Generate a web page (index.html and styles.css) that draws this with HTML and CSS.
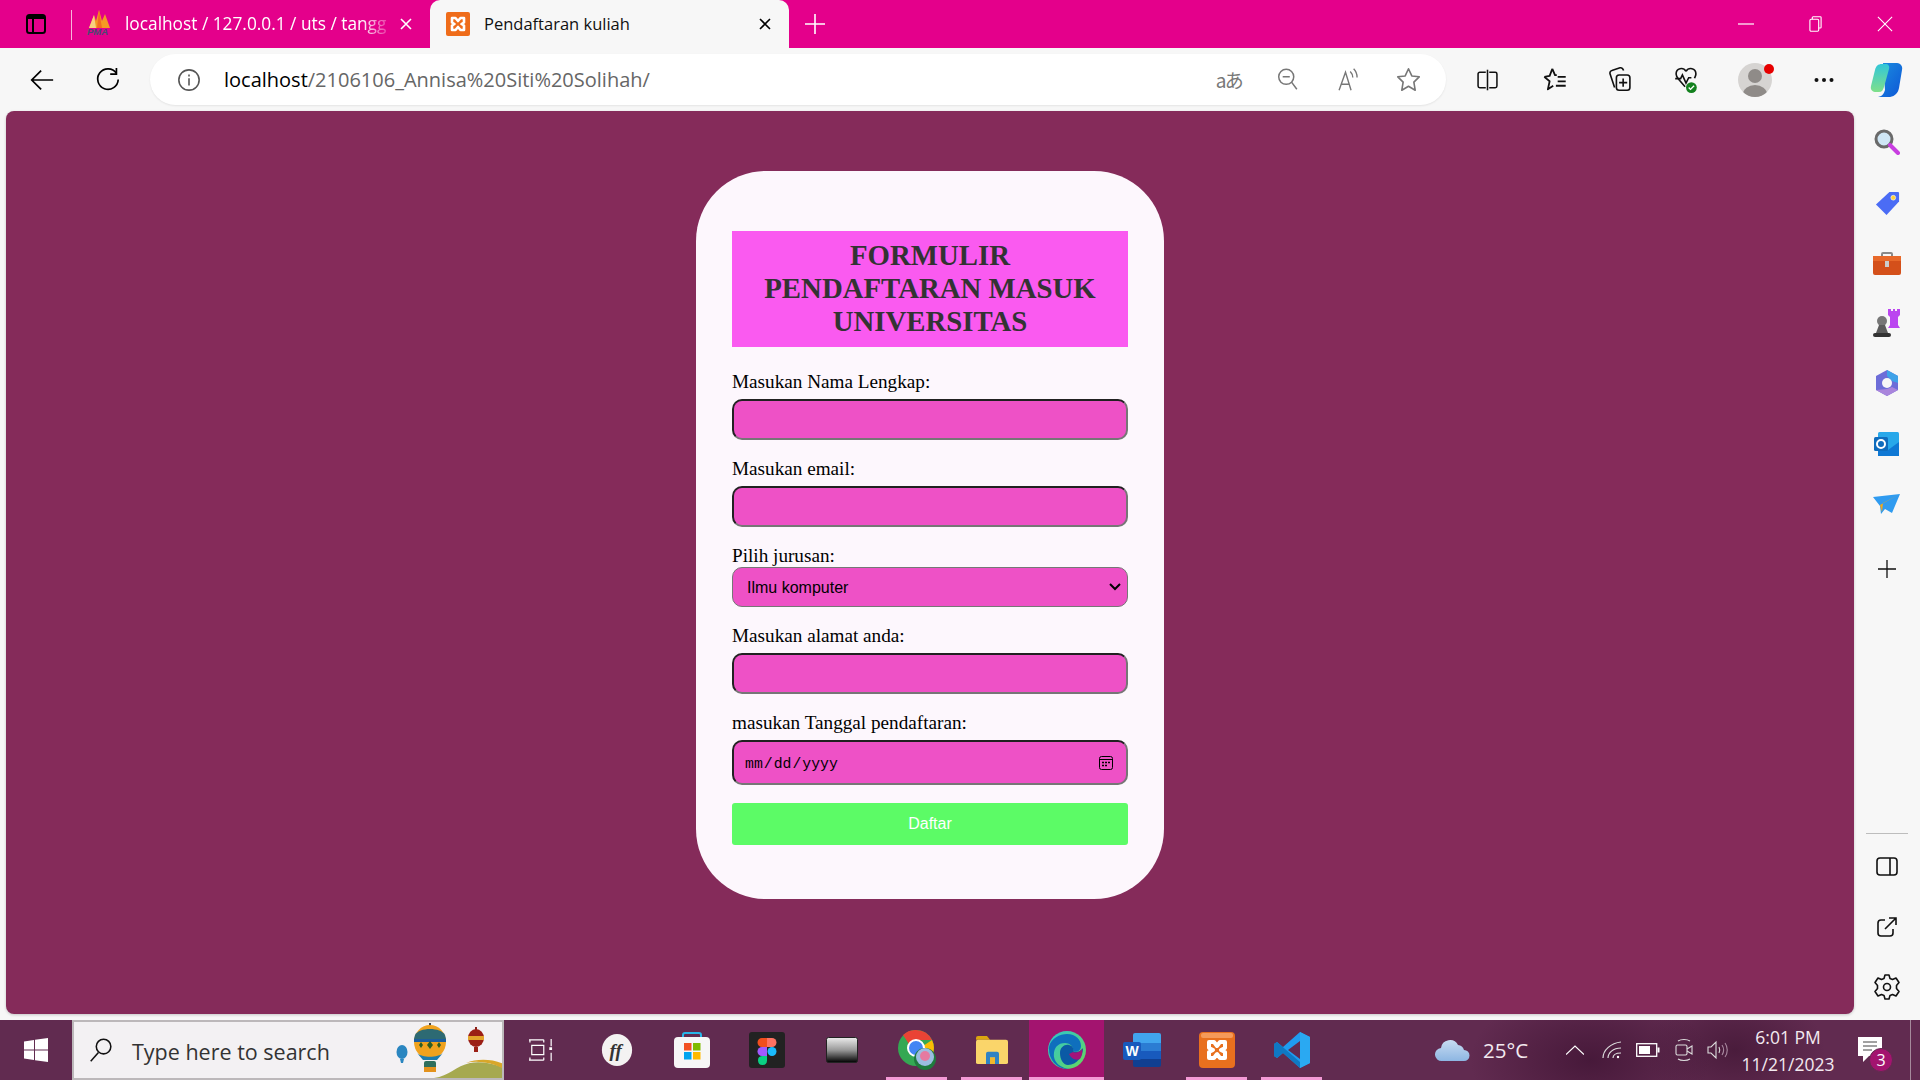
FILE: index.html
```html
<!DOCTYPE html>
<html lang="id">
<head>
<meta charset="utf-8">
<title>Pendaftaran kuliah</title>
<link rel="stylesheet" href="styles.css">
</head>
<body>
<div class="tabbar">
  <div class="tb-slot tb-side"><svg width="24" height="24" viewBox="0 0 24 24" fill="none" stroke="#000" stroke-width="2"><rect x="3" y="3" width="18" height="18" rx="2.5"/><path d="M3 5h18" stroke-width="4"/><path d="M9 7v14"/></svg></div>
  <div class="tb-sep"></div>
  <div class="tab tab-off">
    <svg class="fav" width="26" height="28" viewBox="0 0 26 28"><path d="M3 18 8 5l2 6 3-11 3 11 3-7 5 14z" fill="#f59a23"/><path d="M8 5l2 13H3z" fill="#f9d27f"/><path d="M13 0l3 18h-5z" fill="#f26b21"/><text x="1" y="25" class="pma">PMA</text></svg>
    <span class="tab-title tab-fade">localhost / 127.0.0.1 / uts / tangg</span>
    <svg class="tab-x" width="14" height="14" viewBox="0 0 14 14" stroke="#fff" stroke-width="1.6"><path d="M2 2l10 10M12 2 2 12"/></svg>
  </div>
  <div class="tab tab-on">
    <svg class="fav" width="24" height="24" viewBox="0 0 24 24"><rect width="24" height="24" rx="2" fill="#ef6c1a"/><path d="M6 6h3.500L12 9l2.500-3H18v4.500L15.500 12l2.500 1.500V18h-3.500L12 15l-2.500 3H6v-4.500L8.500 12 6 10.500z" fill="#ef6c1a" stroke="#fff" stroke-width="2.600" stroke-linejoin="round"/></svg>
    <span class="tab-title">Pendaftaran kuliah</span>
    <svg class="tab-x" width="14" height="14" viewBox="0 0 14 14" stroke="#000" stroke-width="1.6"><path d="M2 2l10 10M12 2 2 12"/></svg>
  </div>
  <div class="tb-plus"><svg width="22" height="22" viewBox="0 0 22 22" stroke="#fff" stroke-width="1.6"><path d="M11 1v20M1 11h20"/></svg></div>
  <div class="win">
    <svg width="16" height="16" viewBox="0 0 16 16" stroke="#fff" stroke-width="1.2"><path d="M0 8h16"/></svg>
    <svg width="15" height="16" viewBox="0 0 16 20" fill="none" stroke="#fff" stroke-width="1.4"><rect x="1" y="4" width="11" height="15" rx="1.5"/><path d="M4 4V2a1 1 0 0 1 1-1h9a1 1 0 0 1 1 1v12a1 1 0 0 1-1 1h-2"/></svg>
    <svg width="16" height="16" viewBox="0 0 18 18" stroke="#fff" stroke-width="1.2"><path d="M1 1l16 16M17 1 1 17"/></svg>
  </div>
</div>

<div class="toolbar">
  <button class="tool tool-back"><svg width="24" height="24" viewBox="0 0 28 28" fill="none" stroke="#000" stroke-width="2"><path d="M27 14H2M13 3 2 14l11 11"/></svg></button>
  <button class="tool tool-reload"><svg width="25" height="25" viewBox="0 0 28 28" fill="none" stroke="#000" stroke-width="1.9"><path d="M24 7a11.500 11.500 0 1 0 2 7"/><path d="M24 1v7h-7"/></svg></button>
  <div class="omnibox">
    <svg class="info" width="24" height="24" viewBox="0 0 26 26" fill="none" stroke="#555" stroke-width="1.7"><circle cx="13" cy="13" r="11"/><path d="M13 11v8M13 7v2.200"/></svg>
    <span class="url"><b>localhost</b>/2106106_Annisa%20Siti%20Solihah/</span>
    <div class="omni-icons">
      <span class="omni-ico"><span class="aa">aあ</span></span>
      <span class="omni-ico"><svg width="22" height="23" viewBox="0 0 24 26" fill="none" stroke="#777" stroke-width="1.700"><circle cx="10" cy="10" r="8.500"/><path d="M6 10h8M16 16l6 8"/></svg></span>
      <span class="omni-ico"><svg width="23" height="24" viewBox="0 0 26 28" fill="none" stroke="#777" stroke-width="1.600"><path d="M2 26 9.500 5 16 26M4.500 19h9"/><path d="M15 4c2 2 3 4 3 7M19 1c3 3 4 6 4 10"/></svg></span>
      <span class="omni-ico"><svg width="25" height="25" viewBox="0 0 28 28" fill="none" stroke="#777" stroke-width="1.800"><path d="M14 2l3.700 8 8.300 1-6 6 1.500 9L14 21.500 6.500 26 8 17l-6-6 8.300-1z" stroke-linejoin="round"/></svg></span>
    </div>
  </div>
  <div class="tool-icons">
    <span class="ti ti-split"><svg width="23" height="24" viewBox="0 0 24 28" fill="none" stroke="#111" stroke-width="1.800"><path d="M10 5H3a2 2 0 0 0-2 2v14a2 2 0 0 0 2 2h7M14 5h7a2 2 0 0 1 2 2v14a2 2 0 0 1-2 2h-7"/><path d="M12 2v24"/></svg></span>
    <span class="ti ti-fav"><svg width="24" height="25" viewBox="0 0 26 28" fill="none" stroke="#111" stroke-width="2"><path d="M10 2l3 7 2 0M1 11l6 5-2 9 6-4M1 11l6-1 3-8" stroke-linejoin="round"/><path d="M16 11h9M16 16h9M14 21h11"/></svg></span>
    <span class="ti ti-coll"><svg width="24" height="27" viewBox="0 0 26 30" fill="none" stroke="#111" stroke-width="1.800"><path d="M7 24 2 9a3 3 0 0 1 2-4l9-3c2-.5 3 .5 4 3"/><rect x="9" y="10" width="15" height="17" rx="3"/><path d="M16.500 14v9M12 18.500h9"/></svg></span>
    <span class="ti ti-heart"><svg width="24" height="27" viewBox="0 0 26 30" fill="none" stroke="#111" stroke-width="1.800"><path d="M13 6c3-5 11-4 11 3 0 2-1 3-1.500 4.500M13 6C10 1 2 2 2 9c0 3 2 5 3 6l7 8"/><path d="M1 14h6l2-4 4 9 3-6h3"/><circle cx="19" cy="24" r="6" fill="#13811e" stroke="none"/><path d="M16 24l2 2 4-4" stroke="#fff" stroke-width="1.500"/></svg></span>
    <span class="ti ti-profile"><svg width="34" height="34" viewBox="0 0 34 34"><defs><clipPath id="pc"><circle cx="17" cy="17" r="17"/></clipPath></defs><circle cx="17" cy="17" r="17" fill="#d6d4d2"/><g clip-path="url(#pc)"><circle cx="17" cy="13" r="7" fill="#8f8b88"/><ellipse cx="17" cy="31" rx="12" ry="9" fill="#8f8b88"/></g></svg><span class="dot"></span></span>
    <span class="ti ti-more"><svg width="20" height="6" viewBox="0 0 20 6" fill="#111"><circle cx="2.500" cy="3" r="2"/><circle cx="10" cy="3" r="2"/><circle cx="17.500" cy="3" r="2"/></svg></span>
    <span class="ti ti-copilot"><svg width="36" height="36" viewBox="0 0 36 36"><defs><linearGradient id="cp1" x1="0" y1="0" x2="1" y2="1"><stop offset="0" stop-color="#1c8fe0"/><stop offset="1" stop-color="#0d56d6"/></linearGradient><linearGradient id="cp2" x1="0" y1="0" x2="0" y2="1"><stop offset="0" stop-color="#31c6d8"/><stop offset="1" stop-color="#7fe08a"/></linearGradient></defs><path d="M14 1h14c4 0 6 4 5 7l-3 18c-1 5-4 8-9 9H9c5-1 6-4 7-7z" fill="url(#cp1)"/><path d="M13 2c-4 0-6 2-7 6L2 24c-1 4 2 6 5 6h3c3 0 4-2 5-5l5-18c1-3-1-5-3-5z" fill="url(#cp2)"/></svg></span>
  </div>
</div>

<div class="middle">
  <main class="page">
    <form class="card">
      <h1 class="title">FORMULIR PENDAFTARAN MASUK UNIVERSITAS</h1>
      <label class="lbl lbl-first">Masukan Nama Lengkap:</label>
      <input class="fld" type="text">
      <label class="lbl">Masukan email:</label>
      <input class="fld" type="email">
      <label class="lbl lbl-sel">Pilih jurusan:</label>
      <select class="sel"><option>Ilmu komputer</option></select>
      <label class="lbl">Masukan alamat anda:</label>
      <input class="fld" type="text">
      <label class="lbl">masukan Tanggal pendaftaran:</label>
      <input class="fld fld-date" type="date">
      <button class="submit" type="button">Daftar</button>
    </form>
  </main>
  <aside class="side">
    <span class="si"><svg width="26" height="26" viewBox="0 0 26 26"><circle cx="10" cy="10" r="8" fill="#cfe6f5" stroke="#6a6a6a" stroke-width="3"/><path d="M16 16l8 8" stroke="#c83ee0" stroke-width="4" stroke-linecap="round"/></svg></span>
    <span class="si si-tag"><svg width="25" height="25" viewBox="0 0 26 26"><path d="M15 1h9a1 1 0 0 1 1 1v9L12 25 1 14z" fill="#4b6cf5"/><circle cx="19" cy="7" r="2.500" fill="#ffd23a" stroke="#fff" stroke-width=".6"/></svg></span>
    <span class="si"><svg width="28" height="24" viewBox="0 0 28 24"><path d="M9 6V3a1 1 0 0 1 1-1h8a1 1 0 0 1 1 1v3" fill="none" stroke="#8a8a8a" stroke-width="2"/><rect y="5" width="28" height="19" rx="2" fill="#d4501a"/><rect y="5" width="28" height="5" fill="#e8692a"/><rect x="12" y="10" width="4" height="6" fill="#ccc"/></svg></span>
    <span class="si"><svg width="28" height="30" viewBox="0 0 28 30"><circle cx="9" cy="13" r="5" fill="#777"/><path d="M6 17h6l3 8H3z" fill="#5c5c5c"/><rect y="25" width="18" height="4" rx="2" fill="#333"/><path d="M15 1h3v2h2V1h2v2h2V1h3v6l-2 2v8l2 3H15l2-3V9l-2-2z" fill="#bb45f0"/></svg></span>
    <span class="si"><svg width="26" height="28" viewBox="0 0 26 28"><path d="M13 1l11 6v14l-11 6-11-6V7z" fill="#6d6dd8"/><path d="M13 1l11 6v7l-6-2-5-5z" fill="#3fa2e8"/><path d="M2 21l11 6 11-6-6-3-5 2z" fill="#a985dc"/><circle cx="13" cy="14" r="5" fill="#f7f7f7"/></svg></span>
    <span class="si"><svg width="26" height="26" viewBox="0 0 26 26"><rect x="4" y="1" width="21" height="24" rx="1.500" fill="#28a8ea"/><path d="M4 13l10 6 11-8v14H4z" fill="#0f78d4"/><rect y="6" width="14" height="14" rx="1.500" fill="#0f6cbd"/><circle cx="7" cy="13" r="4" fill="none" stroke="#fff" stroke-width="2"/></svg></span>
    <span class="si"><svg width="28" height="20" viewBox="0 0 28 20"><path d="M0 3l27-3-8 19-7-4-4 5-1-8z" fill="#2f9bf0"/><path d="M7 11 27 0 10 9l-1 9z" fill="#f2a81d"/></svg></span>
    <span class="si si-plus"><svg width="18" height="18" viewBox="0 0 18 18" stroke="#111" stroke-width="1.300"><path d="M9 0v18M0 9h18"/></svg></span>
    <div class="side-bottom">
      <div class="side-rule"></div>
      <span class="si si-low"><svg width="22" height="20" viewBox="0 0 22 20" fill="none" stroke="#111" stroke-width="1.600"><rect x="1" y="1" width="20" height="17" rx="3"/><path d="M14 1v17"/></svg></span>
      <span class="si si-low"><svg width="20" height="20" viewBox="0 0 20 20" fill="none" stroke="#111" stroke-width="1.600"><path d="M8 3H4a3 3 0 0 0-3 3v10a3 3 0 0 0 3 3h9a3 3 0 0 0 3-3v-4"/><path d="M8 12 19 1M12 1h7v7"/></svg></span>
      <span class="si si-low"><svg width="26" height="26" viewBox="0 0 26 26" fill="none" stroke="#111" stroke-width="1.600"><path d="M11 1h4l1 3.500 2.500 1L22 4l3 4.500-2.500 3v3l2.500 3-3 4.500-3.500-1.500-2.500 1L15 25h-4l-1-3.500-2.500-1L4 22l-3-4.500 2.500-3v-3L1 8.500 4 4l3.500 1.500 2.500-1z" stroke-linejoin="round"/><circle cx="13" cy="13" r="3.500"/></svg></span>
    </div>
  </aside>
</div>

<footer class="taskbar">
  <div class="start"><svg width="24" height="24" viewBox="0 0 24 24" fill="#fff"><path d="M0 3.500 10 2v9.500H0zM11 1.800 24 0v11.500H11zM0 12.500h10V22L0 20.500zM11 12.500h13V24l-13-1.800z"/></svg></div>
  <div class="search">
    <svg class="s-glass" width="24" height="24" viewBox="0 0 28 28" fill="none" stroke="#111" stroke-width="1.800"><circle cx="17" cy="10" r="8.500"/><path d="M11 17 2 27"/></svg>
    <span class="s-text">Type here to search</span>
    <svg class="s-art" width="112" height="56" viewBox="0 0 112 56">
      <path d="M40 56c15-2 22-12 36-15 10-2 24 0 36 6v9z" fill="#a6a94f"/><path d="M72 41c12-3 28 0 40 7v-5C100 37 84 36 72 41z" fill="#d8a72a"/>
      <ellipse cx="8" cy="30" rx="5.500" ry="7" fill="#2a86c0"/><path d="M6 37h4l-1 4H7z" fill="#2a86c0"/>
      <path d="M36 1v5" stroke="#444" stroke-width="2"/><ellipse cx="36" cy="20" rx="16" ry="17" fill="#f0a21e"/><path d="M21 13c4-8 26-8 30 0l1 4H20z" fill="#2d6a73"/><path d="M20 17h32v3H20z" fill="#1c5d9c"/><path d="M23 31c5 5 21 5 26 0l-6 7H29z" fill="#1c7cae"/><path d="M36 19l3 4-3 4-3-4zM27 20l2 3-2 3-2-3zM45 20l2 3-2 3-2-3z" fill="#2c5c22"/><rect x="30" y="39" width="12" height="10" rx="2" fill="#2e6f5d"/><path d="M30 45h12v5H30z" fill="#e3921d"/>
      <path d="M82 5v3" stroke="#8a2018" stroke-width="2"/><ellipse cx="82" cy="16" rx="8" ry="9" fill="#9b1f15"/><path d="M74 14h16v4H74z" fill="#e3a32a"/><rect x="80" y="25" width="4" height="5" fill="#9b1f15"/>
    </svg>
  </div>
  <div class="tb-view"><svg width="24" height="24" viewBox="0 0 26 24" fill="none" stroke="#fff" stroke-width="1.300"><path d="M0 1h16M1 1v3M16 1v3M0 23h16M1 20v3M16 20v3M3 7h13v10H3zM24 0v8M24 15v9"/><rect x="22" y="9" width="3" height="3" fill="#fff" stroke="none"/></svg></div>
  <div class="apps">
    <span class="app"><svg width="34" height="34" viewBox="0 0 34 36"><ellipse cx="17" cy="18" rx="16" ry="17" fill="#f4f2f2"/><text x="9" y="25" class="ff">ff</text></svg></span>
    <span class="app"><svg width="38" height="38" viewBox="0 0 38 38"><path d="M10 7V4a2 2 0 0 1 2-2h14a2 2 0 0 1 2 2v3" fill="none" stroke="#27b6e8" stroke-width="2"/><rect x="1" y="6" width="36" height="31" rx="4" fill="#f6f6f6"/><rect x="11" y="12" width="7.500" height="7.500" fill="#f25022"/><rect x="20" y="12" width="7.500" height="7.500" fill="#7fba00"/><rect x="11" y="21" width="7.500" height="7.500" fill="#00a4ef"/><rect x="20" y="21" width="7.500" height="7.500" fill="#ffb900"/></svg></span>
    <span class="app"><svg width="36" height="36" viewBox="0 0 36 36"><rect width="36" height="36" rx="3" fill="#222"/><path d="M18 6h-5a4.500 4.500 0 0 0 0 9h5z" fill="#f24e1e"/><path d="M18 6h5a4.500 4.500 0 0 1 0 9h-5z" fill="#ff7262"/><path d="M18 15h-5a4.500 4.500 0 0 0 0 9h5z" fill="#a259ff"/><circle cx="23" cy="19.500" r="4.500" fill="#1abcfe"/><path d="M13 24h5v4.500a4.500 4.500 0 1 1-5-4.500z" fill="#0acf83"/></svg></span>
    <span class="app"><svg width="32" height="26" viewBox="0 0 32 26"><defs><linearGradient id="blk" x1="0" y1="0" x2="0" y2="1"><stop offset="0" stop-color="#ececec"/><stop offset=".5" stop-color="#999"/><stop offset="1" stop-color="#000"/></linearGradient></defs><rect x=".5" y=".5" width="31" height="25" rx="2" fill="url(#blk)" stroke="#222"/></svg></span>
    <span class="app app-line app-chrome"><svg width="40" height="40" viewBox="0 0 40 40"><circle cx="18" cy="18" r="18" fill="#34a853"/><path d="M18 0a18 18 0 0 1 16 10H18a8 8 0 0 0-7 4L5 5a18 18 0 0 1 13-5z" fill="#ea4335"/><path d="M34 10a18 18 0 0 1-10 25l-6-11a8 8 0 0 0 7-8z" fill="#fbbc04"/><circle cx="18" cy="18" r="8" fill="#4285f4" stroke="#fff" stroke-width="2"/><circle cx="27" cy="29" r="11" fill="#1f7a3d"/><circle cx="27" cy="27" r="9" fill="#9bbde0"/><circle cx="27" cy="26" r="5" fill="#e57aa0"/></svg></span>
    <span class="app app-line"><svg width="34" height="28" viewBox="0 0 34 30" preserveAspectRatio="none"><path d="M1 2a2 2 0 0 1 2-2h9l3 4h-14z" fill="#dba50f"/><rect x="1" y="4" width="32" height="26" rx="2" fill="#fad56a"/><path d="M11 30V19a2 2 0 0 1 2-2h9a2 2 0 0 1 2 2v11h-4v-7h-5v7z" fill="#2f83c4"/><rect x="15" y="23" width="5" height="7" fill="#f2b82c"/></svg></span>
    <span class="app app-on"><svg width="38" height="38" viewBox="0 0 38 38"><defs><linearGradient id="eg1" x1="0" y1="0" x2="1" y2="1"><stop offset="0" stop-color="#2ec4cf"/><stop offset="1" stop-color="#67d85a"/></linearGradient></defs><circle cx="19" cy="19" r="19" fill="url(#eg1)"/><path d="M1 16C3 7 12 3 19 3c9 0 14 6 14 12 0 5-5 7-8 5 1-4-3-8-8-8C9 12 5 18 6 26c1 6 7 11 15 12C10 39 0 29 1 16z" fill="#0f6fbd"/><path d="M12 22c0-6 5-9 9-8 4 1 5 4 4 6 3 2 7 1 10-3 0 8-6 17-15 17-5 0-8-6-8-12z" fill="#0b5aa5"/><path d="M25 21c2 1 6 1 9-3 1 3 0 7-2 10-5 2-9-1-11-5z" fill="#a3147a"/></svg></span>
    <span class="app"><svg width="38" height="36" viewBox="0 0 38 36"><path d="M10 3a2 2 0 0 1 2-2h24a2 2 0 0 1 2 2v8H10z" fill="#41a5ee"/><rect x="10" y="11" width="28" height="8" fill="#2b7cd3"/><rect x="10" y="19" width="28" height="8" fill="#185abd"/><path d="M10 27h28v6a2 2 0 0 1-2 2H12a2 2 0 0 1-2-2z" fill="#103f91"/><rect y="10" width="18" height="18" rx="2" fill="#185abd"/><text x="2.500" y="24" class="w">W</text></svg></span>
    <span class="app app-line"><svg width="36" height="36" viewBox="0 0 36 36"><rect width="36" height="36" rx="4" fill="#e8701e"/><rect x="2" y="1" width="32" height="5" rx="2" fill="#f59a59"/><path d="M10 10h5l3 4 3-4h5v6l-4 2 4 2v6h-5l-3-4-3 4h-5v-6l4-2-4-2z" fill="#e8701e" stroke="#fff" stroke-width="4" stroke-linejoin="round"/></svg></span>
    <span class="app app-line"><svg width="36" height="36" viewBox="0 0 36 36"><path d="M26 0l10 5v26l-10 5-17-15-6 5-3-2v-12l3-2 6 5z" fill="#1f9cf0"/><path d="M26 9 14 18l12 9z" fill="#612b50"/><path d="M26 0v36l10-5V5z" fill="#2aa9f2"/><path d="M0 12l3-2 23 20v6L9 21l-6 5-3-2z" fill="#0b6fb8" opacity=".8"/></svg></span>
  </div>
  <div class="tray">
    <svg class="t-cloud" width="36" height="24" viewBox="0 0 36 24"><defs><linearGradient id="cl" x1="0" y1="0" x2="0" y2="1"><stop offset="0" stop-color="#c8dcf2"/><stop offset="1" stop-color="#8db6e2"/></linearGradient></defs><path d="M7 23a6.500 6.500 0 0 1-1-13 9 9 0 0 1 17-3 7 7 0 0 1 6 5 5.500 5.500 0 0 1 0 11z" fill="url(#cl)"/></svg>
    <span class="t-temp">25°C</span>
    <svg class="t-chev" width="18" height="10" viewBox="0 0 18 10" fill="none" stroke="#fff" stroke-width="1.200"><path d="M0 9.500 9 1l9 8.500"/></svg>
    <svg class="t-wifi" width="20" height="18" viewBox="0 0 20 18" fill="none" stroke="#ddd" stroke-width="1.200"><path d="M1 17C1 9 9 2 19 1M6 17c0-5 5-10 13-10M11 17c0-3 3-5 8-5"/><circle cx="16" cy="16" r="1.200" fill="#fff" stroke="none"/></svg>
    <svg class="t-bat" width="24" height="14" viewBox="0 0 24 14"><rect x=".7" y=".7" width="20" height="12.600" fill="none" stroke="#fff" stroke-width="1.300"/><rect x="3" y="3" width="11" height="8" fill="#fff"/><rect x="21.500" y="4.500" width="2" height="5" fill="#fff"/></svg>
    <svg class="t-cam" width="18" height="24" viewBox="0 0 18 24" fill="none" stroke="#ddd" stroke-width="1.100"><path d="M3 3c3-2 9-2 12 0M3 21c3 2 9 2 12 0"/><rect x="1" y="7" width="11" height="10" rx="1.500"/><path d="M12 11l5-3v8l-5-3"/></svg>
    <svg class="t-vol" width="22" height="20" viewBox="0 0 22 20" fill="none" stroke="#ddd" stroke-width="1.100"><path d="M1 7h3l5-5v16l-5-5H1z"/><path d="M12 7c1 2 1 4 0 6"/><path d="M15 5c2 3 2 7 0 10M18 3c3 4 3 10 0 14" stroke="#a98aa0"/></svg>
    <div class="t-clock"><span>6:01 PM</span><span>11/21/2023</span></div>
    <div class="t-note"><svg width="24" height="26" viewBox="0 0 24 26"><path d="M0 0h24v19H11l-6 6v-6H0z" fill="#fff"/><path d="M5 5h14M5 9h14M5 13h9" stroke="#444" stroke-width="1"/></svg><span class="t-badge">3</span></div>
    <div class="t-edge"></div>
  </div>
</footer>
</body>
</html>
```

FILE: styles.css
```css
* { box-sizing: border-box; }
html, body { margin: 0; height: 100%; }
body { width: 1920px; height: 1080px; display: flex; flex-direction: column; overflow: hidden; background: #f7f7f7; font-family: "Open Sans", "Noto Sans", sans-serif; }

/* tab strip */
.tabbar { height: 48px; flex: none; background: #e4008b; display: flex; align-items: stretch; position: relative; }
.tb-slot { display: flex; align-items: center; justify-content: center; }
.tb-side { width: 71px; }
.tb-sep { width: 1px; height: 30px; margin-top: 10px; background: #f7b5da; }
.tab { display: flex; align-items: center; color: #fff; }
.tab-off { width: 358px; padding-left: 14px; font-size: 17.300px; }
.tab-on { width: 359px; padding-left: 16px; background: #f7f7f7; border-radius: 10px 10px 0 0; color: #111; font-size: 16.500px; }
.fav { flex: none; }
.tab-title { white-space: nowrap; overflow: hidden; padding-bottom: 2px; }
.tab-off .tab-title { width: 262px; margin-left: 13px; }
.tab-fade { -webkit-mask-image: linear-gradient(90deg, #000 90%, rgba(0,0,0,.25) 100%); mask-image: linear-gradient(90deg, #000 90%, rgba(0,0,0,.25) 100%); }
.tab-on .tab-title { width: 263px; margin-left: 14px; }
.tab-x { flex: none; margin-left: 12px; }
.tab-on .tab-x { margin-left: 11px; }
.tb-plus { display: flex; align-items: center; margin-left: 15px; }
.win { margin-left: auto; width: 209px; display: grid; grid-template-columns: repeat(3, 69.500px); justify-items: center; align-items: center; }

/* toolbar */
.toolbar { height: 63px; flex: none; background: #f7f7f7; display: flex; align-items: center; }
.tool { width: 66px; height: 48px; padding: 0; background: none; border: 0; display: flex; align-items: center; justify-content: center; }
.tool-back { margin-left: 9px; }
.tool-reload { margin-right: 9px; padding-right: 2px; }
.omnibox { width: 1296px; height: 51px; background: #fff; border-radius: 26px; display: flex; align-items: center; padding-left: 27px; box-shadow: 0 1px 2px rgba(0,0,0,.08); }
.info { flex: none; }
.url { margin-left: 23px; font-size: 20px; color: #666; white-space: nowrap; }
.url b { font-weight: 400; color: #000; }
.omni-icons { margin-left: auto; display: flex; padding-right: 8px; }
.omni-ico { width: 60px; display: flex; align-items: center; justify-content: center; }
.aa { font-size: 19px; letter-spacing: -1.500px; margin-left: 2px; color: #777; font-family: "Noto Sans CJK JP", "Open Sans", sans-serif; }
.tool-icons { display: flex; align-items: center; margin-left: 11px; }
.ti { display: flex; align-items: center; justify-content: center; position: relative; }
.ti-split { width: 60px; }
.ti-fav { width: 75px; }
.ti-coll { width: 56px; }
.ti-heart { width: 76px; }
.ti-profile { width: 62px; }
.ti-more { width: 76px; }
.ti-copilot { width: 50px; }
.dot { position: absolute; top: 1px; left: 40px; width: 10px; height: 10px; border-radius: 50%; background: #e60000; }

/* middle */
.middle { height: 909px; flex: none; display: flex; }
.page { width: 1848px; height: 903px; margin-left: 6px; background: #852b5a; border-radius: 8px; display: flex; justify-content: center; align-items: flex-start; padding-top: 60px; box-shadow: 0 1px 3px rgba(0,0,0,.2); }
.card { width: 468px; height: 728px; padding: 60px 36px 0; background: #fdf7fd; border-radius: 70px; font-family: "Liberation Serif", serif; }
.title { margin: 0; padding: 8px 20px 9px; background: #fa5af0; color: #333; font-size: 28.800px; line-height: 33px; font-weight: 700; text-align: center; }
.lbl { display: block; margin-top: 18px; margin-bottom: 6px; height: 22px; font-size: 19.200px; line-height: 22px; color: #000; }
.lbl-first { margin-top: 24px; margin-bottom: 6px; }
.lbl-sel { margin-top: 18px; margin-bottom: 0; }
.fld { display: block; width: 100%; height: 41px; padding: 0 10px; margin: 0; background: #ee51c6; border-radius: 10px; border-width: 2px; border-style: inset; border-color: #767676; }
.fld-date { height: 45px; padding-top: 3px; font-family: "Liberation Mono", monospace; font-size: 14.800px; color: #000; }
.fld-date::-webkit-calendar-picker-indicator { width: 14px; height: 14px; padding: 0; margin-right: 3px; margin-top: -2px; background: url("data:image/svg+xml,%3Csvg xmlns='http://www.w3.org/2000/svg' viewBox='0 0 14 14' fill='none' stroke='%23000' stroke-width='1'%3E%3Crect x='.5' y='.5' width='13' height='13' rx='2'/%3E%3Cpath d='M.5 3.500h13'/%3E%3Cpath d='M3 6.500h2M6 6.500h2M9 6.500h2M3 9.500h2M6 9.500h2' stroke-width='1.400'/%3E%3C/svg%3E") no-repeat center / 14px 14px; }
.sel { display: block; width: 100%; height: 40px; padding: 0 30px 0 14px; margin: 0; appearance: none; -webkit-appearance: none; background: #ee51c6 url("data:image/svg+xml,%3Csvg xmlns='http://www.w3.org/2000/svg' viewBox='0 0 12 8' fill='none' stroke='%23000' stroke-width='2'%3E%3Cpath d='M1 1l5 5 5-5'/%3E%3C/svg%3E") no-repeat right 6px center / 12px 8px; border: 1.500px solid #767676; border-radius: 10px; font-family: "Liberation Sans", sans-serif; font-size: 16px; color: #000; }
.submit { display: block; width: 100%; height: 42px; margin-top: 18px; padding: 0; background: #5cfb66; border: 0; border-radius: 3px; color: #fff; font-family: "Liberation Sans", sans-serif; font-size: 16px; }

/* sidebar */
.side { width: 66px; display: flex; flex-direction: column; align-items: center; padding-top: 1px; padding-bottom: 3px; }
.si { height: 60.300px; flex: none; width: 100%; display: flex; align-items: center; justify-content: center; }
.si-low { height: 60px; }
.si-tag svg { margin-top: 3px; }
.si-plus { margin-top: 5px; }
.side-bottom { margin-top: auto; width: 100%; display: flex; flex-direction: column; align-items: center; }
.side-rule { width: 42px; height: 1px; background: #bdbdbd; margin-bottom: 3px; }

/* taskbar */
.taskbar { height: 60px; flex: none; display: flex; align-items: stretch; color: #fff; background: radial-gradient(ellipse 120px 70px at 1590px 40px, #47193a 0%, transparent 100%), radial-gradient(ellipse 90px 60px at 1735px 30px, #4a1c3c 0%, transparent 100%), #612b50; }
.start { width: 72px; display: flex; align-items: center; justify-content: center; }
.search { width: 432px; background: #f3f1f3; border: 2px solid #bcb8ba; display: flex; align-items: center; padding-left: 15px; overflow: hidden; color: #333; }
.s-glass { flex: none; }
.s-text { margin-left: 19px; padding-top: 2px; font-size: 21.500px; color: #333; white-space: nowrap; }
.s-art { flex: none; margin-left: auto; margin-right: -4px; align-self: flex-end; }
.tb-view { width: 75px; display: flex; align-items: center; justify-content: center; padding-right: 2px; }
.apps { display: flex; }
.app { width: 75px; display: flex; align-items: center; justify-content: center; position: relative; }
.app-chrome svg { margin-left: 3px; }
.app-line::after, .app-on::after { content: ""; position: absolute; left: 7px; right: 7px; bottom: 0; height: 3px; background: #f49ad6; }
.app-on { background: #a3146f; }
.app-on::after { left: 0; right: 0; }
.tray { flex: 1; position: relative; display: flex; align-items: center; padding-left: 106px; }
.t-cloud { flex: none; margin-right: 12px; }
.t-temp { font-size: 20.500px; color: #f3eaf0; width: 57px; }
.t-chev { flex: none; margin-left: 26px; }
.t-wifi { flex: none; margin-left: 18px; }
.t-bat { flex: none; margin-left: 14px; }
.t-cam { flex: none; margin-left: 15px; }
.t-vol { flex: none; margin-left: 14px; }
.t-clock { width: 100px; margin-left: 9px; display: flex; flex-direction: column; align-items: center; gap: 5px; font-size: 17.500px; line-height: 22px; color: #f3eaf0; }
.t-note { position: relative; margin-left: 20px; display: flex; }
.t-badge { position: absolute; left: 11px; top: 11px; width: 24px; height: 24px; border-radius: 50%; background: #a3146f; border: 1px solid #612b50; font-size: 16px; line-height: 22px; text-align: center; color: #fff; }
.t-edge { position: absolute; right: 9px; top: 0; bottom: 0; width: 1px; background: #a58a9b; }

/* svg text */
.pma { font: italic 700 9.500px "Liberation Sans", sans-serif; fill: #4a4a70; }
.ff { font: italic 700 20px "Liberation Serif", serif; fill: #333; }
.w { font: 700 14px "Liberation Sans", sans-serif; fill: #fff; }
```
